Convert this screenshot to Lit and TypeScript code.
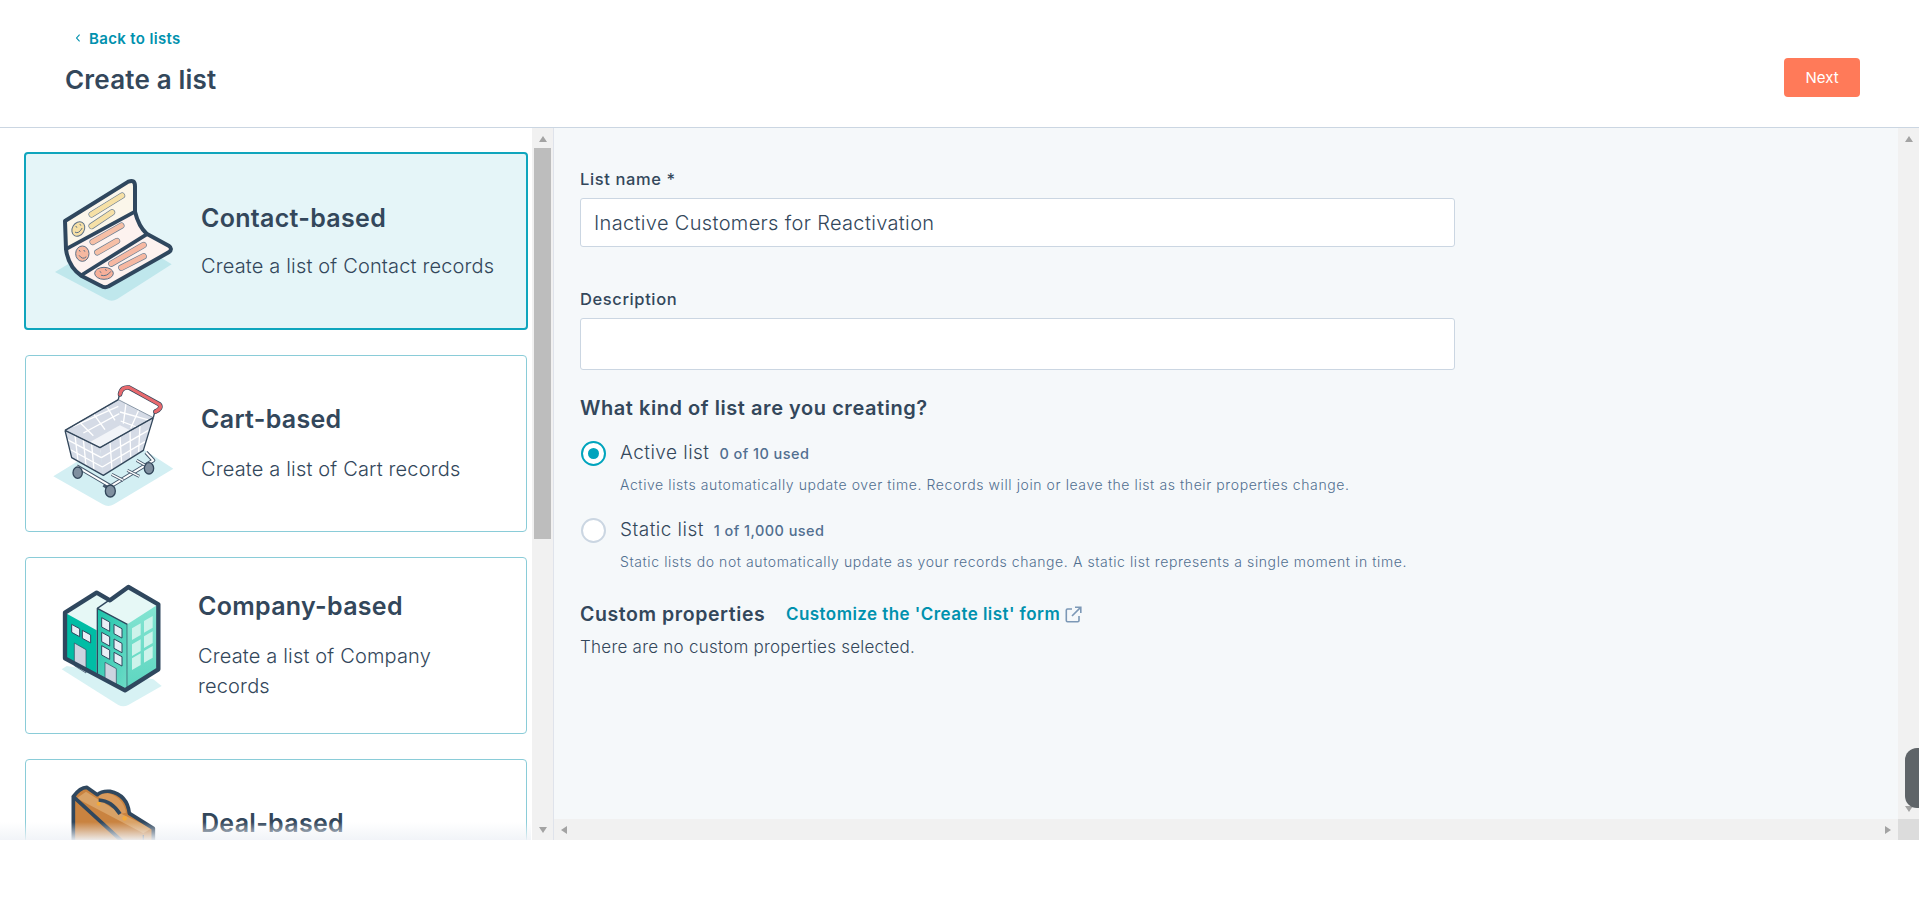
import { LitElement, css, html, svg } from 'lit'
import { customElement } from 'lit/decorators.js'

const INK = '#2f475e'

// one rounded line with a dark outline, used for the text bars on the contact card
const bar = (x1: number, y1: number, x2: number, y2: number, fill: string) => svg`
  <line x1=${x1} y1=${y1} x2=${x2} y2=${y2} stroke="#6b7e92" stroke-width="19" stroke-linecap="round"/>
  <line x1=${x1} y1=${y1} x2=${x2} y2=${y2} stroke=${fill} stroke-width="15" stroke-linecap="round"/>
`

const contactArt = svg`
  <svg class="art" viewBox="0 15 450 450" aria-hidden="true">
    <path d="M45 333 L100 300 L330 270 L395 310 L232 414 Q215 424 198 414 Z" fill="#bfe7ec"/>
    <path d="M75 180 L265 62 Q285 54 285 76 L285 152 Q296 196 320 218 L386 254 Q400 264 386 274 L206 376 Q194 382 182 374 L125 345 Q85 318 78 265 Z" fill="#fdf2ef"/>
    <path d="M75 180 L265 62 Q285 54 285 76 L285 152 L82 266 Z" fill="#fbf6ea"/>
    <path d="M75 180 L265 62 Q285 54 285 76 L285 152 Q296 196 320 218 L386 254 Q400 264 386 274 L206 376 Q194 382 182 374 L125 345 Q85 318 78 265 Z" fill="none" stroke=${INK} stroke-width="12" stroke-linejoin="round"/>
    <path d="M82 262 L285 152 M125 342 L320 220" fill="none" stroke=${INK} stroke-width="11" stroke-linecap="round"/>
    ${bar(155, 160, 246, 104, '#f6e0a6')}
    ${bar(155, 195, 216, 154, '#f6e0a6')}
    ${bar(158, 243, 244, 194, '#f6bfa6')}
    ${bar(172, 274, 231, 240, '#f6bfa6')}
    ${bar(214, 308, 311, 252, '#f6b8a2')}
    ${bar(244, 320, 311, 286, '#f6b8a2')}
    <ellipse cx="115" cy="204" rx="18" ry="23" transform="rotate(30 115 204)" fill="#f6e0a6" stroke="#5d7186" stroke-width="3"/>
    <path d="M106 214 Q116 220 126 202 M108 196 l2 3 M120 190 l2 3" fill="none" stroke="#5d7186" stroke-width="3" stroke-linecap="round"/>
    <ellipse cx="127" cy="278" rx="20" ry="23" fill="#f6b8a0" stroke="#5d7186" stroke-width="3"/>
    <path d="M118 284 Q128 298 138 288 M118 268 l2 3 M132 268 l2 3" fill="none" stroke="#5d7186" stroke-width="3" stroke-linecap="round"/>
    <ellipse cx="192" cy="337" rx="28" ry="18" fill="#f6b09a" stroke="#5d7186" stroke-width="3"/>
    <path d="M184 343 Q200 348 212 332 M180 332 l3 2 M196 326 l3 2" fill="none" stroke="#5d7186" stroke-width="3" stroke-linecap="round"/>
  </svg>
`

const cartArt = svg`
  <svg class="art" viewBox="0 -4 450 450" aria-hidden="true">
    <path d="M40 318 L150 250 L300 230 L400 295 L222 402 Q205 412 188 402 Z" fill="#d3eff3"/>
    <g fill="none" stroke="#46596d" stroke-width="4" stroke-linejoin="round">
      <path d="M110 288 L212 348 L340 270 L318 246" stroke-width="12"/>
      <path d="M110 288 L212 348 L340 270 L318 246" stroke="#fff" stroke-width="6"/>
      <path d="M215 312 L250 330 M262 300 L298 318 M290 270 L325 290" stroke-width="9"/>
      <path d="M215 312 L250 330 M262 300 L298 318 M290 270 L325 290" stroke="#fff" stroke-width="4"/>
      <path d="M190 345 L212 358" stroke-width="9"/>
    </g>
    <g stroke="#33475b" stroke-width="4" fill="#7f8f9f">
      <ellipse cx="113" cy="307" rx="14" ry="17"/>
      <ellipse cx="327" cy="294" rx="14" ry="17"/>
      <ellipse cx="211" cy="362" rx="15" ry="18"/>
    </g>
    <path d="M75 180 L235 88 L340 142 L180 232 Z" fill="#f2f4f8"/>
    <path d="M235 88 L240 165 L150 215 L75 180 Z M235 88 L340 142 L300 195 L240 165 Z" fill="#d5dbe6"/>
    <path d="M118 155 L160 196 M160 130 L195 178 M200 108 L225 150 M258 100 L250 160 M296 120 L272 174 M100 168 L235 108 M130 188 L238 130 M240 125 L330 150 M242 152 L310 178" stroke="#fff" stroke-width="4" fill="none"/>
    <path d="M75 180 L95 262 L190 315 L180 232 Z" fill="#d5dbe6"/>
    <path d="M180 232 L190 315 L310 240 L340 142 Z" fill="#d5dbe6"/>
    <path d="M82 208 L184 262 M88 236 L187 290 M105 195 L114 272 M130 208 L138 285 M155 222 L162 300 M184 262 L325 180 M187 290 L315 214 M210 215 L216 298 M240 198 L245 280 M270 180 L272 262 M300 163 L296 245" stroke="#fff" stroke-width="4" fill="none"/>
    <path d="M75 180 L235 88 L340 142 L180 232 Z" fill="none" stroke="#8b99a8" stroke-width="3"/>
    <path d="M75 180 L180 232 L340 142 M75 180 L235 88 M75 180 L95 262 L190 315 L310 240 L340 142" fill="none" stroke="#33475b" stroke-width="4" stroke-linejoin="round"/>
    <path d="M235 88 L240 64 M340 142 L346 118" stroke="#33475b" stroke-width="4"/>
    <path d="M240 72 Q244 48 268 52 L358 102 Q368 114 346 124" fill="none" stroke="#33475b" stroke-width="14" stroke-linecap="round" stroke-linejoin="round"/>
    <path d="M240 72 Q244 48 268 52 L358 102 Q368 114 346 124" fill="none" stroke="#e8696d" stroke-width="10" stroke-linecap="round" stroke-linejoin="round"/>
  </svg>
`

const win = (x: number, y: number, w: number, h: number, fill: string, line: string) => svg`
  <path d="M${x} ${y} L${x + w} ${y + w * 0.55} L${x + w} ${y + w * 0.55 + h} L${x} ${y + h} Z" fill=${fill} stroke=${line} stroke-width="3"/>
`
const sideWin = (x: number, y: number) => svg`
  <path d="M${x} ${y} L${x + 26} ${y - 15} L${x + 26} ${y + 20} L${x} ${y + 35} Z" fill="#cdf3eb"/>
`

const companyArt = svg`
  <svg class="art" viewBox="0 0 450 450" aria-hidden="true">
    <defs>
      <linearGradient id="mid" x1="0" y1="0" x2="1" y2="1"><stop offset="0" stop-color="#1cc3aa"/><stop offset="1" stop-color="#6fdcc7"/></linearGradient>
      <linearGradient id="side" x1="0" y1="0" x2="0" y2="1"><stop offset="0" stop-color="#84e4d2"/><stop offset="1" stop-color="#5dd6c0"/></linearGradient>
    </defs>
    <path d="M65 295 L80 285 L340 325 L365 345 L265 402 Q250 410 235 402 Z" fill="#d7f2f4"/>
    <path d="M75 125 L170 65 L210 88 L265 48 L355 100 L355 295 L255 358 L75 262 Z" fill="#e6f8f6"/>
    <path d="M75 125 L170 178 L170 318 L75 262 Z" fill="#00bda5"/>
    ${win(95, 160, 24, 24, '#e8eff6', INK)}
    ${win(127, 178, 25, 24, '#e8eff6', INK)}
    <path d="M103 216 L138 236 L138 306 L103 284 Z" fill="#ccd4e0" stroke=${INK} stroke-width="2"/>
    <path d="M172 112 L262 160 L262 358 L172 310 Z" fill="url(#mid)" stroke=${INK} stroke-width="4" stroke-linejoin="round"/>
    <path d="M172 112 L210 86" stroke=${INK} stroke-width="4"/>
    ${win(185, 140, 24, 28, '#e8eff6', INK)}
    ${win(222, 160, 24, 28, '#e8eff6', INK)}
    ${win(185, 184, 24, 28, '#e8eff6', INK)}
    ${win(222, 204, 24, 28, '#e8eff6', INK)}
    ${win(185, 224, 24, 28, '#e8eff6', INK)}
    ${win(222, 244, 24, 28, '#e8eff6', INK)}
    <path d="M195 274 L229 293 L229 345 L195 326 Z" fill="#ccd4e0" stroke=${INK} stroke-width="2"/>
    <path d="M262 160 L355 100 L355 295 L262 355 Z" fill="url(#side)"/>
    ${sideWin(276, 172)} ${sideWin(312, 150)}
    ${sideWin(276, 220)} ${sideWin(312, 196)}
    ${sideWin(276, 262)} ${sideWin(312, 240)}
    <path d="M75 125 L170 65 L210 88 L265 48 L355 100 L355 295 L255 358 L75 262 Z" fill="none" stroke=${INK} stroke-width="13" stroke-linejoin="round"/>
  </svg>
`

const dealArt = svg`
  <svg class="art" viewBox="0 9 450 450" aria-hidden="true">
    <path d="M100 80 L100 300 L340 300 L340 175 L268 130 Q262 75 210 64 Q185 62 172 74 L140 52 Q120 52 100 80 Z" fill="#c98340"/>
    <path d="M110 85 L138 65 L245 132 L335 175 L310 190 Z" fill="#d9a266"/>
    <path d="M175 75 Q205 60 235 85 Q255 105 258 128 L240 132 Q222 96 180 92 Z" fill="#d89a5c"/>
    <path d="M100 80 L100 300 M340 300 L340 175 L268 130 Q262 75 210 64 Q185 62 172 74 L140 52 Q120 52 100 80 Z M176 90 Q215 92 240 132" fill="none" stroke=${INK} stroke-width="11" stroke-linejoin="round"/>
    <path d="M310 195 L310 300" stroke=${INK} stroke-width="4"/>
    <circle cx="176" cy="101" r="6" fill="#f2a93b"/>
    <circle cx="254" cy="145" r="7" fill="#f2a93b"/>
  </svg>
`

type Kind = {
  title: string
  desc: string
  art: unknown
  selected?: boolean
  tight?: boolean
}

const KINDS: Kind[] = [
  { title: 'Contact-based', desc: 'Create a list of Contact records', art: contactArt, selected: true },
  { title: 'Cart-based', desc: 'Create a list of Cart records', art: cartArt },
  { title: 'Company-based', desc: 'Create a list of Company records', art: companyArt, tight: true },
  { title: 'Deal-based', desc: 'Create a list of Deal records', art: dealArt },
]

const arrow = (dir: 'up' | 'down' | 'back' | 'fwd') => html`<span class="arrow ${dir}"></span>`

@customElement('app-root')
export class AppRoot extends LitElement {
  static styles = css`
    :host {
      display: block;
      height: 898px;
      overflow: hidden;
      background: #fff;
      color: #33475b;
      font-family: Inter, 'Noto Sans', sans-serif;
    }
    * { box-sizing: border-box; }
    .app {
      position: relative;
      height: 840px;
      display: flex;
      flex-direction: column;
    }
    .top {
      height: 128px;
      flex: none;
      display: flex;
      justify-content: space-between;
      align-items: flex-start;
      border-bottom: 1px solid #cbd6e2;
    }
    .heading { padding: 26px 0 0 65px; }
    .back {
      display: flex;
      align-items: center;
      gap: 9px;
      margin-left: 11px;
      height: 24px;
      color: #0091ae;
      font-size: 15px;
      font-weight: 600;
      letter-spacing: .35px;
    }
    .back svg { width: 4px; height: 8px; flex: none; }
    h1 {
      margin: 12px 0 0;
      font-size: 26px;
      line-height: 36px;
      font-weight: 600;
      letter-spacing: .2px;
    }
    .next {
      margin: 58px 59px 0 0;
      width: 76px;
      height: 39px;
      border: 0;
      border-radius: 4px;
      background: #ff7a59;
      color: #fff;
      font: 400 15px Inter, sans-serif;
    }
    .body { flex: 1; min-height: 0; display: flex; }
    .picker {
      position: relative;
      width: 554px;
      flex: none;
      display: flex;
      background: #fff;
      border-right: 1px solid #dfe3eb;
    }
    .cards {
      flex: 1;
      min-width: 0;
      overflow: hidden;
      padding: 24px 4px 0 24px;
      display: flex;
      flex-direction: column;
      gap: 25px;
    }
    .card {
      flex: none;
      height: 177px;
      margin: 0 1px;
      padding-left: 14px;
      display: flex;
      align-items: center;
      gap: 11px;
      background: #fff;
      border: 1px solid #8accd8;
      border-radius: 4px;
    }
    .card.selected {
      height: 178px;
      margin: 0;
      border: 2px solid #0fa5bd;
      background: #e5f5f8;
    }
    .card.tight { gap: 8px; }
    .art { width: 150px; height: 150px; flex: none; display: block; }
    .copy { max-width: 302px; }
    .copy h2 {
      margin: 0 0 20px;
      font-size: 25px;
      line-height: 30px;
      font-weight: 600;
      letter-spacing: .3px;
    }
    .selected .copy { padding-top: 2px; }
    .selected .copy h2 { margin-bottom: 18px; }
    .copy p {
      margin: 0;
      font-size: 20px;
      line-height: 30px;
      font-weight: 300;
      letter-spacing: .16px;
    }
    .vbar {
      width: 21px;
      flex: none;
      display: flex;
      flex-direction: column;
      align-items: center;
      background: #f1f1f1;
    }
    .vbar .thumb {
      width: 17px;
      height: 391px;
      background: #bdbdbd;
    }
    .vbar .arrow.up { margin: 8px 0 6px; }
    .vbar .arrow.down { margin-top: auto; margin-bottom: 7px; }
    .arrow { display: block; width: 0; height: 0; border: 4.5px solid transparent; }
    .arrow.up { border-top: 0; border-bottom: 6px solid #a3a3a3; }
    .arrow.down { border-bottom: 0; border-top: 6px solid #a3a3a3; }
    .arrow.back { border-left: 0; border-right: 6px solid #a3a3a3; }
    .arrow.fwd { border-right: 0; border-left: 6px solid #a3a3a3; }
    .fade {
      position: absolute;
      left: 0;
      right: 22px;
      bottom: 0;
      height: 18px;
      background: linear-gradient(to bottom, rgba(240, 243, 247, 0), rgba(240, 243, 247, 0.92));
      pointer-events: none;
    }
    .main { flex: 1; min-width: 0; display: flex; flex-direction: column; }
    .pane { flex: 1; min-height: 0; display: flex; }
    .form { flex: 1; min-width: 0; padding: 39px 0 0 26px; background: #f5f8fa; }
    .hbar {
      height: 21px;
      flex: none;
      display: flex;
      align-items: center;
      background: #f1f1f1;
    }
    .hbar .arrow.back { margin-left: 7px; }
    .hbar .arrow.fwd { margin-left: auto; margin-right: 7px; }
    .corner { width: 21px; height: 21px; background: #dcdcdc; }
    label {
      display: block;
      font-size: 16.5px;
      line-height: 24px;
      font-weight: 500;
      letter-spacing: .6px;
    }
    .field {
      width: 875px;
      height: 49px;
      margin-top: 7px;
      padding: 0 13px;
      display: flex;
      align-items: center;
      background: #fff;
      border: 1px solid #cbd6e2;
      border-radius: 3px;
      font-size: 20px;
      font-weight: 300;
      letter-spacing: .34px;
    }
    .field.tall { height: 52px; }
    .gap-name { margin-top: 40px; }
    h3 {
      margin: 24px 0 0;
      font-size: 20px;
      line-height: 28px;
      font-weight: 600;
      letter-spacing: .55px;
    }
    .option {
      display: grid;
      grid-template-columns: 25px 1fr;
      column-gap: 14px;
      margin: 17px 0 0 1px;
    }
    .option + .option { margin-top: 21px; }
    .radio {
      width: 25px;
      height: 25px;
      align-self: center;
      display: flex;
      align-items: center;
      justify-content: center;
      background: #fff;
      border: 2px solid #cbd6e2;
      border-radius: 50%;
    }
    .radio.on { border-color: #00a4bd; }
    .radio.on::after {
      content: '';
      width: 11px;
      height: 11px;
      border-radius: 50%;
      background: #00a4bd;
    }
    .opt-name {
      display: flex;
      align-items: baseline;
      gap: 10px;
      font-size: 19px;
      line-height: 28px;
      font-weight: 300;
      letter-spacing: .47px;
    }
    .used { font-size: 14.5px; font-weight: 500; color: #516f90; letter-spacing: .44px; }
    .help {
      grid-column: 2;
      margin-top: 7px;
      font-size: 14px;
      line-height: 20px;
      font-weight: 300;
      color: #516f90;
      letter-spacing: .59px;
    }
    .custom {
      display: flex;
      align-items: center;
      margin-top: 28px;
      height: 28px;
    }
    .custom strong { font-size: 19.5px; font-weight: 600; width: 206px; letter-spacing: .58px; }
    .custom .link {
      display: flex;
      align-items: center;
      gap: 5px;
      color: #0091ae;
      font-size: 17px;
      font-weight: 600;
      letter-spacing: .44px;
    }
    .custom svg { width: 17px; height: 17px; }
    .none {
      margin-top: 7px;
      font-size: 17px;
      line-height: 24px;
      font-weight: 300;
      letter-spacing: .24px;
    }
    .handle {
      position: absolute;
      right: 0;
      top: 748px;
      width: 14px;
      height: 60px;
      background: #5f6468;
      border-radius: 12px 0 0 12px;
    }
  `

  render() {
    return html`
      <div class="app">
        <header class="top">
          <div class="heading">
            <a class="back">
              <svg viewBox="0 0 4 8"><path d="M3.6.6.6 4l3 3.4" fill="none" stroke="#0091ae" stroke-width="1.1"/></svg>
              Back to lists
            </a>
            <h1>Create a list</h1>
          </div>
          <button class="next">Next</button>
        </header>
        <div class="body">
          <section class="picker">
            <div class="cards">
              ${KINDS.map(
                (k) => html`
                  <div class="card ${k.selected ? 'selected' : ''} ${k.tight ? 'tight' : ''}">
                    ${k.art}
                    <div class="copy">
                      <h2>${k.title}</h2>
                      <p>${k.desc}</p>
                    </div>
                  </div>
                `
              )}
            </div>
            <div class="vbar">
              ${arrow('up')}
              <div class="thumb"></div>
              ${arrow('down')}
            </div>
            <div class="fade"></div>
          </section>
          <section class="main">
            <div class="pane">
              <div class="form">
                <label>List name *</label>
                <div class="field">Inactive Customers for Reactivation</div>
                <label class="gap-name">Description</label>
                <div class="field tall"></div>
                <h3>What kind of list are you creating?</h3>
                <div class="option">
                  <span class="radio on"></span>
                  <div class="opt-name">Active list <span class="used">0 of 10 used</span></div>
                  <div class="help">Active lists automatically update over time. Records will join or leave the list as their properties change.</div>
                </div>
                <div class="option">
                  <span class="radio"></span>
                  <div class="opt-name">Static list <span class="used">1 of 1,000 used</span></div>
                  <div class="help">Static lists do not automatically update as your records change. A static list represents a single moment in time.</div>
                </div>
                <div class="custom">
                  <strong>Custom properties</strong>
                  <a class="link">
                    Customize the 'Create list' form
                    <svg viewBox="0 0 17 17" fill="none" stroke="#7c98b6" stroke-width="1.6">
                      <path d="M7 3H2.5A1.2 1.2 0 0 0 1.3 4.2v10.3a1.2 1.2 0 0 0 1.2 1.2h10.3a1.2 1.2 0 0 0 1.2-1.2V10"/>
                      <path d="M10 1.2h5.8V7M15.6 1.4 7 10"/>
                    </svg>
                  </a>
                </div>
                <div class="none">There are no custom properties selected.</div>
              </div>
              <div class="vbar">
                ${arrow('up')}
                ${arrow('down')}
              </div>
            </div>
            <div class="hbar">
              ${arrow('back')}
              ${arrow('fwd')}
              <span class="corner"></span>
            </div>
          </section>
        </div>
        <div class="handle"></div>
      </div>
    `
  }
}
